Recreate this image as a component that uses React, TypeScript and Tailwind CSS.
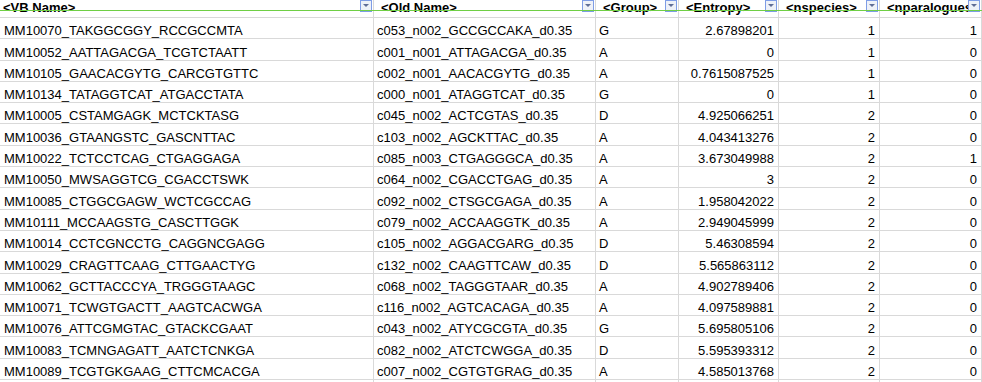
const COLUMNS = [
  { name: "<VB Name>", width: "w-[374px]", align: "left" },
  { name: "<Old Name>", width: "w-[222px]", align: "left" },
  { name: "<Group>", width: "w-[83px]", align: "left" },
  { name: "<Entropy>", width: "w-[100px]", align: "right" },
  { name: "<nspecies>", width: "w-[101px]", align: "right" },
  { name: "<nparalogues>", width: "w-[102px]", align: "right" },
];

const ROWS: (string | number)[][] = [
  ["MM10070_TAKGGCGGY_RCCGCCMTA", "c053_n002_GCCGCCAKA_d0.35", "G", "2.67898201", 1, 1],
  ["MM10052_AATTAGACGA_TCGTCTAATT", "c001_n001_ATTAGACGA_d0.35", "A", "0", 1, 0],
  ["MM10105_GAACACGYTG_CARCGTGTTC", "c002_n001_AACACGYTG_d0.35", "A", "0.7615087525", 1, 0],
  ["MM10134_TATAGGTCAT_ATGACCTATA", "c000_n001_ATAGGTCAT_d0.35", "G", "0", 1, 0],
  ["MM10005_CSTAMGAGK_MCTCKTASG", "c045_n002_ACTCGTAS_d0.35", "D", "4.925066251", 2, 0],
  ["MM10036_GTAANGSTC_GASCNTTAC", "c103_n002_AGCKTTAC_d0.35", "A", "4.043413276", 2, 0],
  ["MM10022_TCTCCTCAG_CTGAGGAGA", "c085_n003_CTGAGGGCA_d0.35", "A", "3.673049988", 2, 1],
  ["MM10050_MWSAGGTCG_CGACCTSWK", "c064_n002_CGACCTGAG_d0.35", "A", "3", 2, 0],
  ["MM10085_CTGGCGAGW_WCTCGCCAG", "c092_n002_CTSGCGAGA_d0.35", "A", "1.958042022", 2, 0],
  ["MM10111_MCCAAGSTG_CASCTTGGK", "c079_n002_ACCAAGGTK_d0.35", "A", "2.949045999", 2, 0],
  ["MM10014_CCTCGNCCTG_CAGGNCGAGG", "c105_n002_AGGACGARG_d0.35", "D", "5.46308594", 2, 0],
  ["MM10029_CRAGTTCAAG_CTTGAACTYG", "c132_n002_CAAGTTCAW_d0.35", "D", "5.565863112", 2, 0],
  ["MM10062_GCTTACCCYA_TRGGGTAAGC", "c068_n002_TAGGGTAAR_d0.35", "A", "4.902789406", 2, 0],
  ["MM10071_TCWGTGACTT_AAGTCACWGA", "c116_n002_AGTCACAGA_d0.35", "A", "4.097589881", 2, 0],
  ["MM10076_ATTCGMGTAC_GTACKCGAAT", "c043_n002_ATYCGCGTA_d0.35", "G", "5.695805106", 2, 0],
  ["MM10083_TCMNGAGATT_AATCTCNKGA", "c082_n002_ATCTCWGGA_d0.35", "D", "5.595393312", 2, 0],
  ["MM10089_TCGTGKGAAG_CTTCMCACGA", "c007_n002_CGTGTGRAG_d0.35", "A", "4.585013768", 2, 0],
  ["", "", "", "", "", ""],
];

function FilterButton() {
  return (
    <span className="absolute right-[1px] top-0 flex h-[12px] w-[12px] items-start justify-center border border-[#7f9de6] bg-[#eef1f8]">
      <svg width="8" height="5" viewBox="0 0 8 5" className="mt-[2px]">
        <path d="M1 1h6L4 4z" fill="#5f6d96" />
      </svg>
    </span>
  );
}

export default function App() {
  return (
    <div
      className="relative h-[382px] w-[982px] overflow-hidden bg-white text-[13px] leading-[13px] text-black"
      style={{ fontFamily: '"Liberation Sans", Arial, sans-serif' }}
    >
      {/* header row */}
      <div className="flex h-[18px]">
        {COLUMNS.map((c, i) => (
          <div
            key={c.name}
            className={`relative shrink-0 overflow-hidden whitespace-nowrap border-b border-r border-[#d9d9d9] pt-[1px] font-bold ${c.width} ${i === 0 ? "pl-[3px]" : "pl-[7px]"}`}
          >
            {c.name}
            <FilterButton />
          </div>
        ))}
      </div>

      {/* data rows */}
      {ROWS.map((row, r) => (
        <div key={r} className="flex h-[21.3px]">
          {row.map((cell, i) => (
            <div
              key={i}
              className={`flex shrink-0 items-end overflow-hidden whitespace-nowrap border-b border-r border-[#d9d9d9] pb-[1px] ${COLUMNS[i].width} ${
                COLUMNS[i].align === "right" ? "justify-end pr-[4px]" : i === 0 ? "pl-[4px]" : "pl-[3px]"
              }`}
            >
              {cell}
            </div>
          ))}
        </div>
      ))}

      {/* green guide line over the header */}
      <div className="absolute left-0 right-0 top-[10px] h-px bg-[#6fcf45]" />
    </div>
  );
}
